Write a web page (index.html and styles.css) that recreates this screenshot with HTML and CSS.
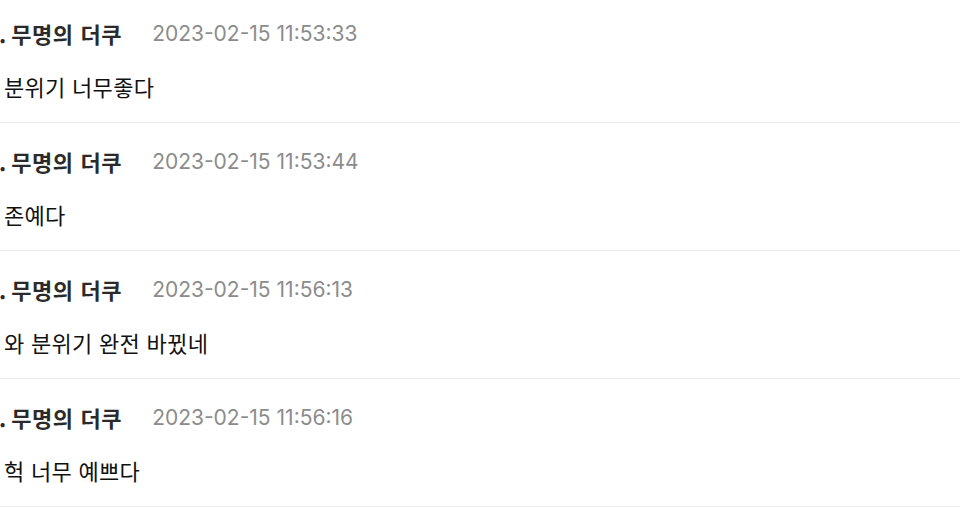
FILE: index.html
```html
<!DOCTYPE html>
<html lang="ko">
<head>
<meta charset="utf-8">
<link rel="stylesheet" href="styles.css">
</head>
<body>
<ul class="comments">
  <li class="comment">
    <div class="meta"><span class="num">1.</span><span class="name">무명의 더쿠</span><span class="time">2023-02-15 11:53:33</span></div>
    <p class="text">분위기 너무좋다</p>
  </li>
  <li class="comment">
    <div class="meta"><span class="num">2.</span><span class="name">무명의 더쿠</span><span class="time">2023-02-15 11:53:44</span></div>
    <p class="text">존예다</p>
  </li>
  <li class="comment">
    <div class="meta"><span class="num">3.</span><span class="name">무명의 더쿠</span><span class="time">2023-02-15 11:56:13</span></div>
    <p class="text">와 분위기 완전 바뀠네</p>
  </li>
  <li class="comment">
    <div class="meta"><span class="num">4.</span><span class="name">무명의 더쿠</span><span class="time">2023-02-15 11:56:16</span></div>
    <p class="text">헉 너무 예쁘다</p>
  </li>
</ul>
</body>
</html>
```
FILE: styles.css
```css
html, body {
  margin: 0;
  padding: 0;
  background: #ffffff;
}
body {
  font-family: "Noto Sans CJK KR", "Noto Sans", sans-serif;
  color: #1a1a1a;
  overflow: hidden;
}
.comments {
  list-style: none;
  margin: -5px 0 0 0;
  padding: 0;
}
.comment {
  padding: 24px 0 22px 4px;
  border-bottom: 1px solid #ebebeb;
}
.meta {
  display: flex;
  align-items: center;
  height: 28px;
  white-space: nowrap;
}
.num {
  font-weight: 700;
  font-size: 22px;
  margin-left: -18px;
  margin-right: 5px;
  color: #2a2a2a;
}
.name {
  font-weight: 700;
  font-size: 22px;
  letter-spacing: 0.6px;
  color: #2a2a2a;
}
.time {
  font-family: "Inter", "Noto Sans", sans-serif;
  font-size: 21px;
  color: #8c8c8c;
  margin-left: 30px;
}
.text {
  margin: 25px 0 0 0;
  height: 28px;
  line-height: 28px;
  font-size: 22px;
  letter-spacing: 0.3px;
  color: #111;
}
```
